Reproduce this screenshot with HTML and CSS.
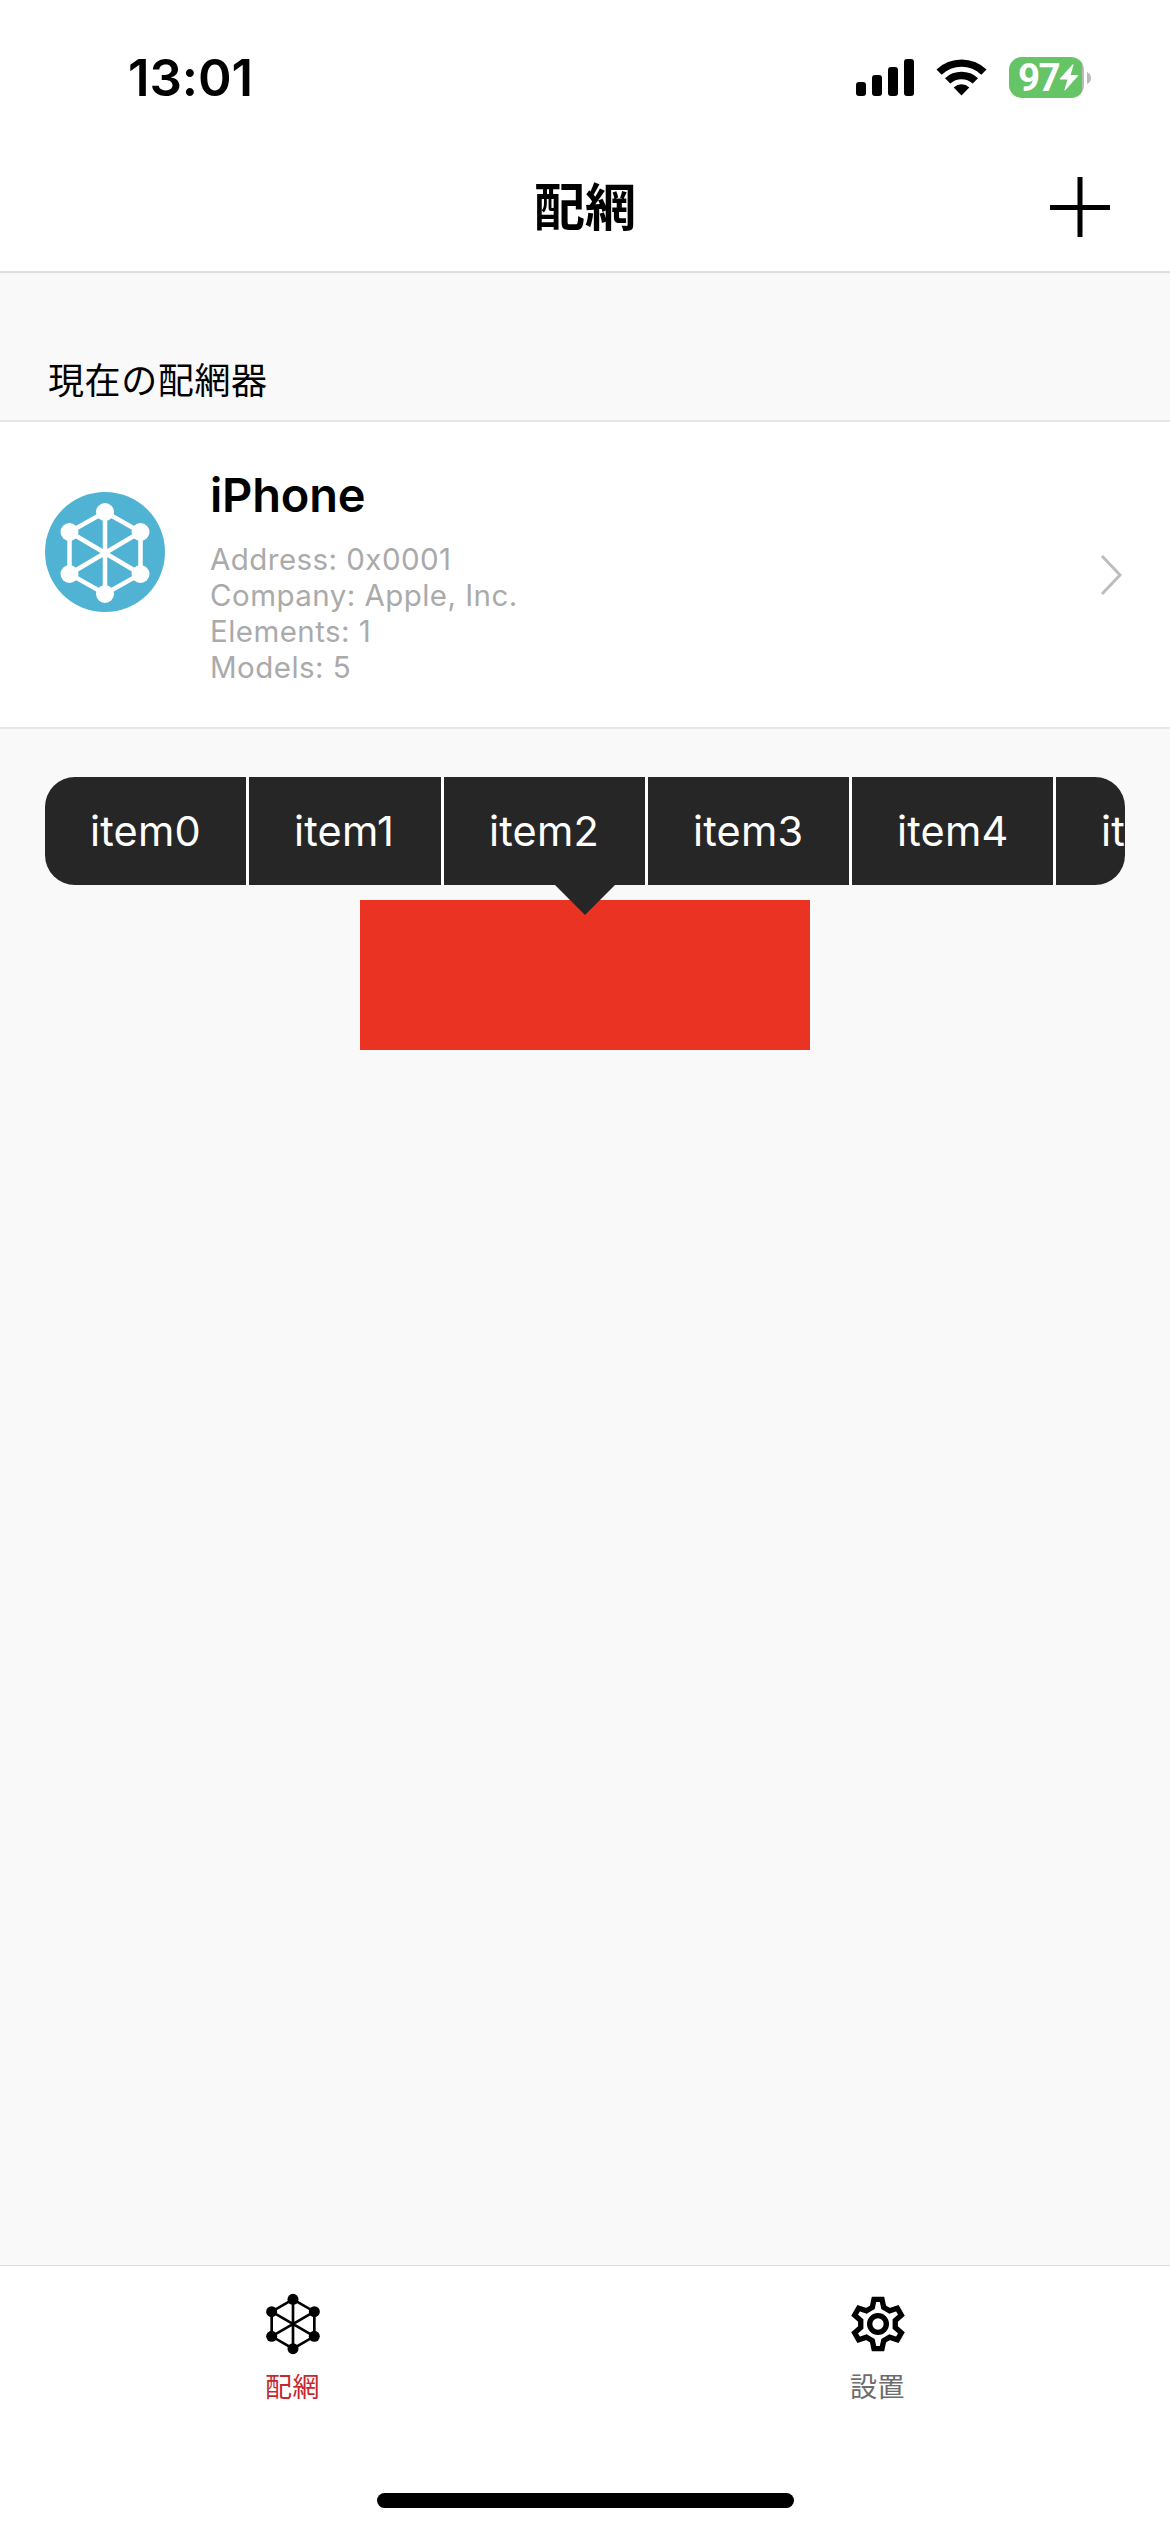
FILE: index.html
```html
<!DOCTYPE html>
<html lang="ja">
<head>
<meta charset="utf-8">
<title>配網</title>
<link rel="stylesheet" href="styles.css">
</head>
<body>
<div class="screen">
  <header class="top">
    <div class="status">
      <span class="time">13:01</span>
      <div class="indicators">
        <svg class="signal" viewBox="0 0 58 37"><rect y="23" width="10" height="14" rx="3"/><rect x="16" y="16" width="10" height="21" rx="3"/><rect x="32" y="8" width="10" height="29" rx="3"/><rect x="48" width="10" height="37" rx="3"/></svg>
        <svg class="wifi" viewBox="0 0 51 37"><path d="M0.5 10.5a36 36 0 0 1 50 0l-5.2 5.3a28.500 28.500 0 0 0-39.600 0z"/><path d="M9 19.200a24 24 0 0 1 33 0l-5.300 5.400a16.500 16.500 0 0 0-22.400 0z"/><path d="M17.700 28.400a11.500 11.500 0 0 1 15.600 0l-7.800 8.100z"/></svg>
        <div class="battery">
          <div class="cell"><span class="level">97</span><svg class="bolt" viewBox="0 0 20 27"><path d="M13.500 0.500L1 14.500q-.8 1 .5 1H8.500L5.500 25.500q-.2 1.500 1 .5L19 12q.8-1-.5-1H11.500L14.500 1.200q.1-1.500-1-.7z"/></svg></div>
          <svg class="nub" viewBox="0 0 4 12"><path d="M0 0q4 2 4 6t-4 6z"/></svg>
        </div>
      </div>
    </div>
    <div class="navbar">
      <h1 class="title">配網</h1>
      <svg class="plus" viewBox="0 0 60 60"><path d="M30 0V60M0 30.500H60"/></svg>
    </div>
  </header>
  <main class="content">
    <h2 class="section">現在の配網器</h2>
    <div class="device">
      <svg class="avatar" viewBox="0 0 120 120"><circle class="disc" cx="60" cy="60" r="60"/><path class="mesh" d="M60 20L95.500 40V82L60 102L24.500 82V40ZM60 20V102M24.500 40L95.500 82M95.500 40L24.500 82"/><g class="nodes"><circle cx="60" cy="20" r="9"/><circle cx="95.500" cy="40" r="9"/><circle cx="95.500" cy="82" r="9"/><circle cx="60" cy="102" r="9"/><circle cx="24.500" cy="82" r="9"/><circle cx="24.500" cy="40" r="9"/></g></svg>
      <div class="info">
        <h3 class="name">iPhone</h3>
        <p class="detail">Address: 0x0001</p>
        <p class="detail company">Company: Apple, Inc.</p>
        <p class="detail">Elements: 1</p>
        <p class="detail">Models: 5</p>
      </div>
      <svg class="chevron" viewBox="0 0 22 42"><path d="M2 2L20 21L2 40"/></svg>
    </div>
    <div class="menu">
      <div class="items">
        <span class="item">item0</span><span class="item narrow">item1</span><span class="item">item2</span><span class="item">item3</span><span class="item">item4</span><span class="item">item5</span>
      </div>
      <svg class="arrow" viewBox="0 0 60 30"><path d="M0 0H60L30 30Z"/></svg>
    </div>
    <div class="target"></div>
  </main>
  <nav class="tabs">
    <div class="tab active">
      <svg class="tab-icon" viewBox="0 0 180 186"><path class="mesh-line" d="M90 19L154 56V130L90 167L26 130V56ZM90 19V167M26 56L154 130M154 56L26 130"/><circle cx="90" cy="19" r="16.500"/><circle cx="154" cy="56" r="16.500"/><circle cx="154" cy="130" r="16.500"/><circle cx="90" cy="167" r="16.500"/><circle cx="26" cy="130" r="16.500"/><circle cx="26" cy="56" r="16.500"/></svg>
      <span class="label">配網</span>
    </div>
    <div class="tab">
      <svg class="tab-icon" viewBox="0 0 180 186"><g class="gear" transform="translate(90 93)"><path d="M-12-74H12L17-50L34.800-39.700L58.100-47.400L70.100-26.600L51.800-10.300V10.300L70.100 26.600L58.100 47.400L34.800 39.700L17 50L12 74H-12L-17 50L-34.800 39.700L-58.100 47.400L-70.100 26.600L-51.800 10.300V-10.300L-70.100-26.600L-58.100-47.400L-34.800-39.700L-17-50Z"/><circle r="25"/></g></svg>
      <span class="label">設置</span>
    </div>
    <div class="home"></div>
  </nav>
</div>
</body>
</html>
```
FILE: styles.css
```css
* { box-sizing: border-box; margin: 0; padding: 0; }
body { background: #fff; color: #000; font-family: Inter, "Noto Sans CJK TC", sans-serif; }
svg { display: block; flex: none; }
.screen { width: 1170px; height: 2532px; display: flex; flex-direction: column; overflow: hidden; background: #f9f9f9; }

.top { height: 273px; background: #fff; border-bottom: 2px solid #dedede; }
.status { height: 141px; display: flex; justify-content: space-between; padding: 57px 79px 0 128px; }
.time { font-size: 51px; font-weight: 600; line-height: 42px; letter-spacing: -.1px; }
.indicators { display: flex; align-items: flex-start; }
.signal { width: 58px; height: 37px; margin-top: 2px; }
.wifi { width: 51px; height: 37px; margin: 2px 22px 0; }
.battery { display: flex; align-items: center; gap: 3px; }
.cell { width: 75px; height: 41px; border-radius: 13px; display: flex; align-items: center; padding-left: 9px; gap: 1px; background: linear-gradient(90deg, #65c466 73px, #b9b9b9 73px); color: #fff; }
.level { width: 40px; font-family: Roboto, sans-serif; font-size: 38.500px; font-weight: 700; line-height: 41px; letter-spacing: -1.500px; }
.bolt { width: 20px; height: 27px; fill: #fff; }
.nub { width: 4px; height: 12px; fill: #b9b9b9; }
.navbar { height: 130px; display: grid; grid-template-columns: 1fr auto 1fr; align-items: center; padding: 0 60px; }
.title { grid-column: 2; font-family: "Noto Sans CJK TC", sans-serif; font-size: 51px; line-height: 60px; font-weight: 700; margin-bottom: 4px; }
.plus { width: 60px; height: 60px; justify-self: end; margin-top: 2px; stroke: #000; stroke-width: 5; }

.content { flex: 1; display: flex; flex-direction: column; align-items: center; }
.section { align-self: stretch; height: 147px; padding: 80px 48px 0; font-family: "Noto Sans CJK JP", sans-serif; font-size: 36px; line-height: 50px; font-weight: 400; letter-spacing: .6px; }
.device { align-self: stretch; height: 309px; display: flex; background: #fff; border: solid #e6e6e6; border-width: 2px 0; padding: 0 48px 0 45px; }
.avatar { width: 120px; height: 120px; margin-top: 70px; }
.disc { fill: #50b3d4; }
.mesh { fill: none; stroke: #fff; stroke-width: 4.5; }
.nodes { fill: #fff; }
.info { flex: 1; padding: 43px 0 0 45px; }
.name { font-size: 47px; line-height: 60px; font-weight: 600; letter-spacing: -.2px; margin-bottom: 16px; }
.detail { font-size: 29.500px; line-height: 36px; color: #aaa; letter-spacing: .45px; }
.chevron { width: 22px; height: 42px; margin-top: 132px; fill: none; stroke: #bdbdbd; stroke-width: 3; }

.menu { width: 1080px; height: 108px; margin-top: 48px; display: flex; flex-direction: column; align-items: center; z-index: 1; }
.items { width: 1080px; height: 108px; flex: none; display: flex; gap: 3px; border-radius: 30px; overflow: hidden; background: #fff; }
.item { flex: none; width: 201px; background: #262626; color: #fff; padding-left: 45px; font-size: 41.500px; line-height: 108px; letter-spacing: .2px; }
.narrow { width: 192px; }
.arrow { width: 60px; height: 30px; fill: #262626; }
.target { width: 450px; height: 150px; margin-top: 15px; background: #ea3323; }

.tabs { height: 267px; display: grid; grid-template-columns: 1fr 1fr; grid-template-rows: 226px 15px; background: #fff; border-top: 1px solid #dedede; }
.tab { display: flex; flex-direction: column; align-items: center; padding-top: 27px; color: #6c6c6c; }
.tab-icon { width: 60px; height: 62px; }
.mesh-line { fill: none; stroke: #000; stroke-width: 8; }
.gear { fill: none; stroke: #000; stroke-width: 16; }
.label { font-family: "Noto Sans CJK TC", sans-serif; font-size: 27px; line-height: 40px; margin-top: 11px; letter-spacing: .5px; }
.active .label { color: #c5282d; }
.home { grid-column: 1 / 3; justify-self: center; width: 417px; height: 15px; border-radius: 8px; background: #000; margin-top: 1px; }
```
